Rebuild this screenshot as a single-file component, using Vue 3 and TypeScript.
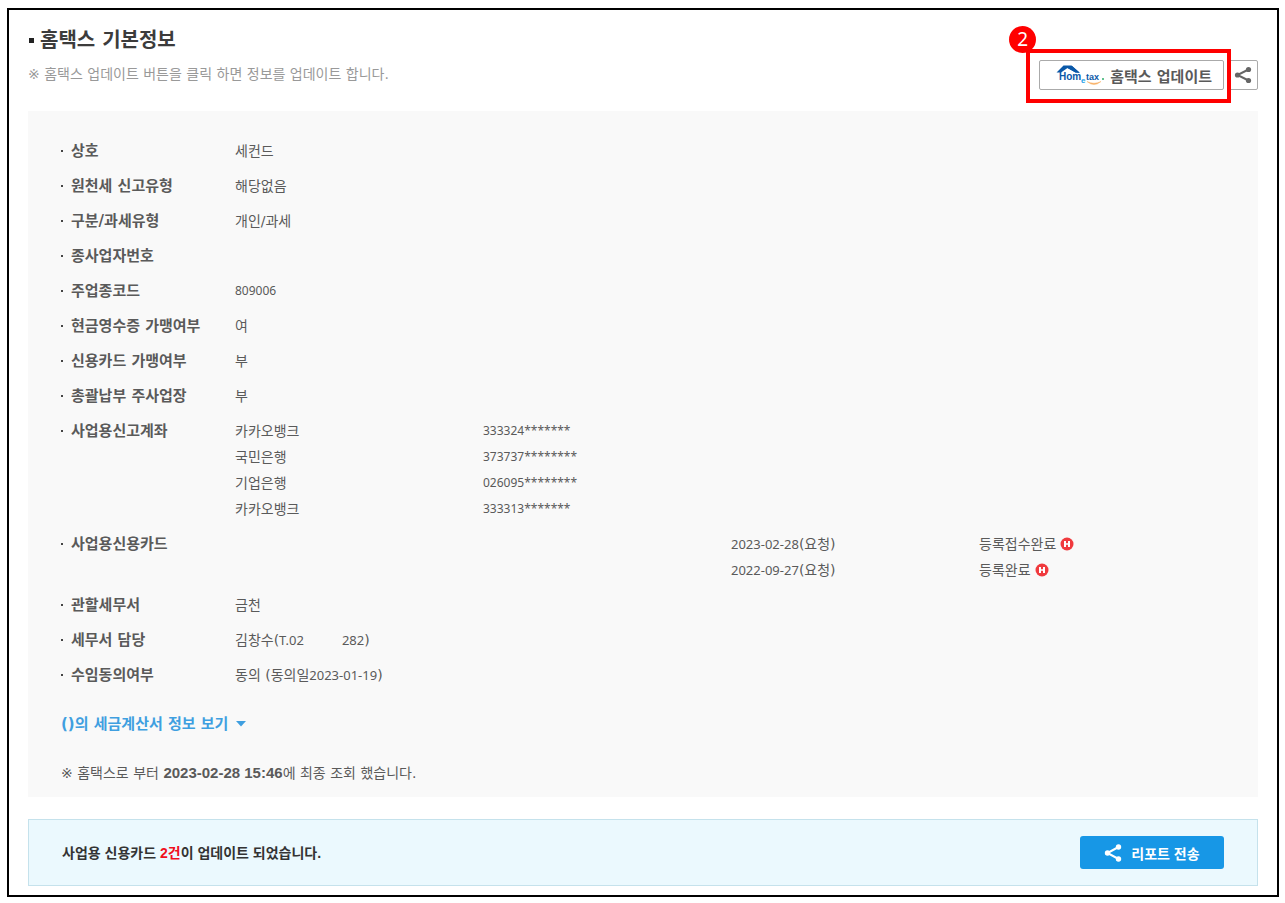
<script setup lang="ts">
interface Part {
  text: string
  kind?: 'num' | 'code' | 'gap'
}
interface Cell {
  parts: Part[]
  col: number
  mark?: boolean
}
interface Row {
  label: string
  lines: Cell[][]
}

const t = (text: string): Part => ({ text })
const n = (text: string): Part => ({ text, kind: 'num' })
const code = (text: string): Part => ({ text, kind: 'code' })
const gap: Part = { text: '', kind: 'gap' }
const cell = (parts: Part[], col = 1, mark = false): Cell => ({ parts, col, mark })
const simple = (label: string, ...parts: Part[]): Row => ({ label, lines: [[cell(parts)]] })

const rows: Row[] = [
  simple('상호', t('세컨드')),
  simple('원천세 신고유형', t('해당없음')),
  simple('구분/과세유형', t('개인/과세')),
  { label: '종사업자번호', lines: [[]] },
  simple('주업종코드', code('809006')),
  simple('현금영수증 가맹여부', t('여')),
  simple('신용카드 가맹여부', t('부')),
  simple('총괄납부 주사업장', t('부')),
  {
    label: '사업용신고계좌',
    lines: [
      ['카카오뱅크', '333324*******'],
      ['국민은행', '373737********'],
      ['기업은행', '026095********'],
      ['카카오뱅크', '333313*******'],
    ].map(([bank, account]) => [cell([t(bank)]), cell([code(account)], 2)]),
  },
  {
    label: '사업용신용카드',
    lines: [
      [cell([n('2023-02-28'), t('(요청)')], 3), cell([t('등록접수완료')], 4, true)],
      [cell([n('2022-09-27'), t('(요청)')], 3), cell([t('등록완료')], 4, true)],
    ],
  },
  simple('관할세무서', t('금천')),
  simple('세무서 담당', t('김창수('), n('T.02'), gap, n('282'), t(')')),
  simple('수임동의여부', t('동의 (동의일'), n('2023-01-19'), t(')')),
]
</script>

<template>
  <main class="frame">
    <header class="head">
      <div>
        <h1 class="title">홈택스 기본정보</h1>
        <p class="hint">※ 홈택스 업데이트 버튼을 클릭 하면 정보를 업데이트 합니다.</p>
      </div>
      <div class="actions">
        <div class="marked">
          <button type="button" class="update">
            <svg class="logo" width="50" height="24" viewBox="0 0 50 24" aria-hidden="true">
              <path d="M0.500 9.500 L7.500 2.500 H15.500 L23.500 9.500 H19.500 L11.500 5 L5 9.500Z" fill="#0a58a8" />
              <path d="M7.500 3.500 L11.500 5 L19.500 9.500 L24 10 L16 3Z" fill="#0a58a8" />
              <text x="3" y="17" class="lg dark" font-size="10">Hom</text>
              <text x="25" y="20" class="lg sky" font-size="8">e</text>
              <text x="30" y="17" class="lg dark" font-size="9">tax</text>
              <circle cx="47" cy="16" r="1" fill="#2fae6a" />
              <path d="M31 18.500 Q38 24.500 45 18.500 Q38 22 31 18.500Z" fill="#f8b36a" stroke="#f8b36a" stroke-width="0.500" />
            </svg>
            <span>홈택스 업데이트</span>
          </button>
          <span class="outline"></span>
          <span class="step">2</span>
        </div>
        <button type="button" class="share" aria-label="공유">
          <svg width="18" height="18" viewBox="0 0 18 18" aria-hidden="true">
            <path d="M14.500 3.500 L3.500 9 L14.500 14.500" fill="none" stroke="#666" stroke-width="2" />
            <circle cx="14.500" cy="3.500" r="2.600" fill="#666" />
            <circle cx="3.500" cy="9" r="2.600" fill="#666" />
            <circle cx="14.500" cy="14.500" r="2.600" fill="#666" />
          </svg>
        </button>
      </div>
    </header>

    <section class="panel">
      <dl class="rows">
        <div v-for="row in rows" :key="row.label" class="row">
          <dt>{{ row.label }}</dt>
          <dd>
            <div v-for="(line, i) in row.lines" :key="i" class="line">
              <span v-for="c in line" :key="c.col" :class="['cell', 'col' + c.col]">
                <span v-for="(p, k) in c.parts" :key="k" :class="p.kind">{{ p.text }}</span>
                <svg v-if="c.mark" class="mark" width="14" height="14" viewBox="0 0 14 14" aria-hidden="true">
                  <circle cx="7" cy="7" r="6.500" fill="#f03a3e" />
                  <path d="M4 4H6V6.200H8V4H10V10H8V7.800H6V10H4Z" fill="#fff" />
                </svg>
              </span>
            </div>
          </dd>
        </div>
      </dl>
      <a href="#" class="more" @click.prevent>
        ()의 세금계산서 정보 보기
        <svg width="10" height="6" viewBox="0 0 10 6" aria-hidden="true">
          <path d="M0 0H10L5 5.500Z" fill="#3f9fe0" />
        </svg>
      </a>
      <p class="note">※ 홈택스로 부터 <strong>2023-02-28 15:46</strong>에 최종 조회 했습니다.</p>
    </section>

    <section class="banner">
      <p>사업용 신용카드 <em>2건</em>이 업데이트 되었습니다.</p>
      <button type="button" class="send">
        <svg width="18" height="18" viewBox="0 0 18 18" aria-hidden="true">
          <path d="M14.500 3 L3.500 9 L14.500 15" fill="none" stroke="#fff" stroke-width="2" />
          <circle cx="14.500" cy="3" r="2.700" fill="#fff" />
          <circle cx="3.500" cy="9" r="2.700" fill="#fff" />
          <circle cx="14.500" cy="15" r="2.700" fill="#fff" />
        </svg>
        <span>리포트 전송</span>
      </button>
    </section>
  </main>
</template>

<style>
body {
  margin: 0;
  background: #fff;
}
</style>

<style scoped>
.frame {
  box-sizing: border-box;
  margin: 8px 6px 6px 7px;
  padding: 16px 19px 9px;
  border: 2px solid #000;
  font-family: "DejaVu Sans", "Noto Sans CJK KR", sans-serif;
  font-size: 14px;
  line-height: 26px;
  color: #5a5a5a;
}
h1, p, dl, dd { margin: 0; }
button {
  box-sizing: border-box;
  padding: 0;
  font-family: inherit;
  cursor: pointer;
}
.head {
  display: flex;
  justify-content: space-between;
  height: 85px;
}
.title {
  display: flex;
  align-items: center;
  gap: 6px;
  font-size: 20px;
  line-height: 28px;
  color: #3c3c3c;
}
.title::before {
  content: "";
  width: 5px;
  height: 5px;
  margin-left: 1px;
  background: #222;
}
.hint {
  margin-top: 7px;
  color: #999;
}
.actions {
  display: flex;
  gap: 4px;
  padding-top: 34px;
}
.marked {
  position: relative;
  height: 30px;
}
.update, .share {
  display: flex;
  align-items: center;
  height: 30px;
  border: 1px solid #aaa;
  border-radius: 2px;
  background: #fff;
}
.update {
  gap: 4px;
  padding: 0 11px 0 16px;
  font-size: 15px;
  font-weight: 700;
  color: #5a5a5a;
}
.share {
  justify-content: center;
  width: 30px;
}
.logo { display: block; }
.lg {
  font-family: "Liberation Sans", sans-serif;
  font-weight: 700;
}
.dark { fill: #0a58a8; }
.sky { fill: #1aa0e8; }
.outline {
  position: absolute;
  inset: -11px -7px -13px -13px;
  border: 4px solid #f00;
  pointer-events: none;
}
.step {
  position: absolute;
  left: -30px;
  top: -34px;
  width: 27px;
  height: 27px;
  border-radius: 50%;
  background: #f00;
  color: #fff;
  font-family: "Noto Sans", sans-serif;
  font-size: 19px;
  line-height: 27px;
  text-align: center;
}
.panel {
  padding: 27px 31px 11px 33px;
  background: #f9f9f9;
}
.rows {
  display: flex;
  flex-direction: column;
  gap: 9px;
}
.row {
  display: grid;
  grid-template-columns: 174px 1fr;
}
dt {
  display: flex;
  align-items: center;
  gap: 8px;
  height: 26px;
  font-size: 15px;
  font-weight: 700;
}
dt::before {
  content: "";
  width: 2px;
  height: 2px;
  background: #444;
}
.line {
  display: grid;
  grid-template-columns: repeat(4, 1fr);
  height: 26px;
}
.cell {
  display: flex;
  align-items: center;
  white-space: pre;
}
.col1 { grid-column: 1; }
.col2 { grid-column: 2; }
.col3 { grid-column: 3; }
.col4 { grid-column: 4; }
.num, .code { font-family: "Noto Sans", sans-serif; }
.num { font-size: 13px; }
.code { font-size: 12px; }
.gap { width: 38px; }
.mark { margin-left: 4px; }
.more {
  display: flex;
  align-items: center;
  gap: 8px;
  margin-top: 23px;
  font-size: 15px;
  font-weight: 700;
  color: #3f9fe0;
  text-decoration: none;
}
.note { margin-top: 23px; }
.note strong {
  font-family: "Liberation Sans", sans-serif;
  font-size: 15px;
}
.banner {
  display: flex;
  align-items: center;
  justify-content: space-between;
  margin-top: 22px;
  padding: 16px 33px;
  border: 1px solid #c5e2ec;
  background: #ebf9fe;
  font-family: "Liberation Sans", "Noto Sans CJK KR", sans-serif;
  font-weight: 700;
  color: #333;
}
.banner em {
  font-style: normal;
  color: #f01020;
}
.send {
  display: flex;
  align-items: center;
  justify-content: center;
  gap: 9px;
  width: 144px;
  height: 33px;
  border: 0;
  border-radius: 3px;
  background: #1797e6;
  font-size: 14px;
  font-weight: 700;
  color: #fff;
}
</style>
